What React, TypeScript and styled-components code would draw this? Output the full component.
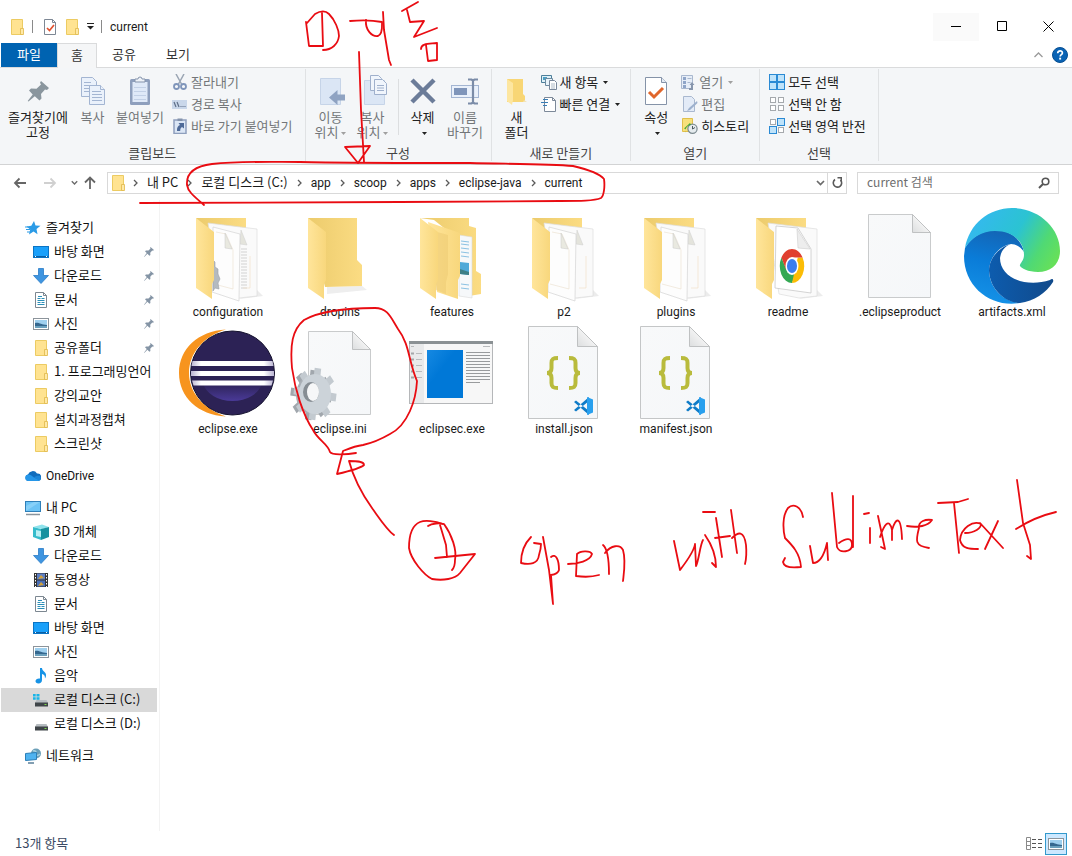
import React from 'react';
import styled, { createGlobalStyle } from 'styled-components';

const GlobalStyle = createGlobalStyle`
  *, *::before, *::after { box-sizing: border-box; }
  body {
    margin: 0;
    background: #fff;
    color: #1a1a1a;
    font-family: 'Noto Sans CJK KR', 'Noto Sans', sans-serif;
    font-size: 13px;
    line-height: 16px;
  }
  button, input { font: inherit; color: inherit; }
  button { border: 0; padding: 0; background: none; }
  a { color: inherit; text-decoration: none; }
  svg { display: block; flex: none; }
`;

/* ---------- layout ---------- */

const Window = styled.div`
  position: relative;
  display: flex;
  flex-direction: column;
  min-height: 100vh;
  overflow: hidden;
`;

const Label = styled.span<{ $latin?: boolean }>`
  padding-bottom: ${(p) => (p.$latin ? 0 : 2)}px;
  font-family: ${(p) => (p.$latin ? "Roboto, 'Noto Sans CJK KR', sans-serif" : 'inherit')};
  font-size: ${(p) => (p.$latin ? 12 : 13)}px;
`;

const TitleBar = styled.header`
  display: flex;
  align-items: center;
  height: 43px;
  padding: 12px 1px 2px 9px;
`;

const QuickTools = styled.div`
  display: flex;
  align-items: center;
  gap: 7px;
`;

const ToolButton = styled.button`
  display: flex;
  align-items: center;
  justify-content: center;
  height: 20px;
`;

const TitleDivider = styled.span`
  width: 1px;
  height: 13px;
  margin-right: 3px;
  background: #8a8a8a;
`;

const Title = styled.h1`
  flex: 1;
  margin: 0;
  padding-left: 5px;
  font-family: Roboto, 'Noto Sans CJK KR', sans-serif;
  font-size: 12px;
  font-weight: 400;
`;

const WindowButton = styled.button<{ $shaded?: boolean }>`
  display: flex;
  align-items: center;
  justify-content: center;
  width: 46px;
  height: 28px;
  background: ${(p) => (p.$shaded ? '#fafafa' : 'transparent')};
`;

const TabBar = styled.nav`
  display: flex;
  height: 24px;
  padding: 0 4px 0 1px;
`;

const Tab = styled.button<{ $kind?: 'file' | 'active' }>`
  width: ${(p) => (p.$kind === 'file' ? 56 : p.$kind === 'active' ? 40 : 54)}px;
  height: ${(p) => (p.$kind === 'active' ? 25 : 24)}px;
  padding-bottom: 2px;
  color: ${(p) => (p.$kind === 'file' ? '#fff' : '#333')};
  background: ${(p) => (p.$kind === 'file' ? '#0063b1' : p.$kind === 'active' ? '#f5f6f7' : 'transparent')};
  border: solid #dadbdc;
  border-width: ${(p) => (p.$kind === 'active' ? '1px 1px 0' : '0')};
  position: relative;
  z-index: 1;
`;

const TabTools = styled.div`
  display: flex;
  align-items: center;
  gap: 9px;
  margin-left: auto;
`;

const Ribbon = styled.section`
  display: flex;
  height: 98px;
  border-top: 1px solid #dadbdc;
  border-bottom: 1px solid #d2d3d4;
  background: #f4f6f8;
`;

const Group = styled.div`
  display: flex;
  flex-direction: column;
  margin: 1px 0 3px;
  padding: 0 5px;
  border-right: 1px solid #e0e2e4;
`;

const GroupBody = styled.div`
  display: flex;
  flex: 1;
  padding-top: 6px;
`;

const GroupName = styled.div`
  height: 16px;
  text-align: center;
  color: #444;
`;

const BigButton = styled.button<{ $width?: number; $off?: boolean }>`
  display: flex;
  flex-direction: column;
  align-items: center;
  gap: 2px;
  width: ${(p) => p.$width ?? 44}px;
  line-height: 15px;
  color: ${(p) => (p.$off ? '#737679' : '#222')};
`;

const Caption = styled.span`
  text-align: center;
  white-space: pre;
  & > svg {
    display: inline-block;
    margin-left: 3px;
    vertical-align: middle;
  }
`;

const SmallColumn = styled.div<{ $left?: number; $right?: number }>`
  display: flex;
  flex-direction: column;
  margin: -4px ${(p) => p.$right ?? 4}px 0 ${(p) => p.$left ?? 4}px;
`;

const SmallButton = styled.button<{ $off?: boolean }>`
  display: flex;
  align-items: center;
  gap: 3px;
  height: 22px;
  white-space: nowrap;
  color: ${(p) => (p.$off ? '#737679' : '#222')};
  & > svg:last-child { margin-left: 2px; }
`;

const InnerDivider = styled.span`
  width: 1px;
  height: 56px;
  margin: 4px 2px 0 3px;
  background: #dcdee0;
`;

const AddressRow = styled.div`
  display: flex;
  align-items: center;
  height: 35px;
  padding: 0 13px 0 12px;
`;

const NavButton = styled.button<{ $width: number }>`
  display: flex;
  align-items: center;
  justify-content: center;
  width: ${(p) => p.$width}px;
  height: 22px;
`;

const AddressBox = styled.div`
  display: flex;
  flex: 1;
  align-items: center;
  height: 22px;
  margin: 0 10px 0 3px;
  padding-left: 2px;
  border: 1px solid #d9d9d9;
`;

const Crumbs = styled.ol`
  display: flex;
  flex: 1;
  margin: 0;
  padding: 0;
  list-style: none;
`;

const Crumb = styled.li`
  display: flex;
  align-items: center;
  height: 20px;
  white-space: nowrap;
  & > svg { margin: 0 9px; }
  &:first-child > svg { margin-left: 7px; }
`;

const CrumbLink = styled(Label)``;

const RefreshButton = styled.button`
  display: flex;
  align-items: center;
  justify-content: center;
  width: 19px;
  height: 20px;
  margin-left: 2px;
  border-left: 1px solid #d9d9d9;
`;

const SearchBox = styled.label`
  display: flex;
  align-items: center;
  width: 202px;
  height: 22px;
  padding: 0 8px 0 9px;
  border: 1px solid #d9d9d9;
`;

const SearchInput = styled.input`
  flex: 1;
  min-width: 0;
  padding: 0 0 2px;
  border: 0;
  outline: 0;
  background: none;
  font-size: 12px;
  &::placeholder { color: #6d6d6d; opacity: 1; }
`;

const Main = styled.div`
  display: flex;
  flex: 1;
`;

const Sidebar = styled.nav`
  display: flex;
  flex-direction: column;
  gap: 8px;
  width: 160px;
  padding: 16px 2px 0 1px;
  border-right: 1px solid #f3f3f3;
`;

const PlaceList = styled.ul`
  margin: 0;
  padding: 0;
  list-style: none;
`;

const Place = styled.a<{ $level: number; $selected?: boolean }>`
  display: flex;
  align-items: center;
  gap: 5px;
  height: 24px;
  padding-left: ${(p) => 24 + p.$level * 8}px;
  padding-right: 3px;
  white-space: nowrap;
  color: #111;
  background: ${(p) => (p.$selected ? '#d9d9d9' : 'transparent')};
  & > svg:last-child:not(:first-child) { margin-left: auto; }
`;

const Files = styled.main`
  flex: 1;
  display: grid;
  grid-template-columns: repeat(auto-fill, 112px);
  align-content: start;
  row-gap: 5px;
  padding: 8px 0 0 12px;
`;

const FileItem = styled.button`
  display: flex;
  flex-direction: column;
  align-items: center;
  & > svg { overflow: visible; }
`;

const StatusBar = styled.footer`
  display: flex;
  align-items: center;
  height: 25px;
  padding: 0 5px 0 15px;
  color: #3b4a63;
`;

const ViewButtons = styled.div`
  display: flex;
  align-items: center;
  margin-left: auto;
`;

const ViewButton = styled.button<{ $on?: boolean }>`
  display: flex;
  align-items: center;
  justify-content: center;
  width: 22px;
  height: 22px;
  border: 1px solid ${(p) => (p.$on ? '#3399cc' : 'transparent')};
  background: ${(p) => (p.$on ? '#cce8ff' : 'transparent')};
`;

const Ink = styled.svg`
  position: absolute;
  top: 0;
  left: 0;
  z-index: 2;
  pointer-events: none;
`;

/* ---------- small icons ---------- */

const FolderSmall = ({ size = 16 }: { size?: number }) => (
  <svg width={size} height={size} viewBox="0 0 16 16">
    <path d="M2.500.5h11v15h-11z" fill="#ffe391" stroke="#eccb62" />
    <path d="M11.500 9.500h3v6h-3z" fill="#ffe9a6" stroke="#e0b84a" strokeWidth=".8" />
  </svg>
);

const DocCheck = () => (
  <svg width="14" height="16" viewBox="0 0 14 16">
    <path d="M1.500.5h8l3 3v12h-11z" fill="#fff" stroke="#7d8794" />
    <path d="M9.500.5v3h3" fill="none" stroke="#7d8794" />
    <path d="M4 9l2.500 2.500L11 6" fill="none" stroke="#e0512f" strokeWidth="1.700" />
  </svg>
);

const Caret = ({ color = '#222' }: { color?: string }) => (
  <svg width="5" height="3" viewBox="0 0 5 3">
    <path d="M0 0h5L2.500 3z" fill={color} />
  </svg>
);

const Chevron = () => (
  <svg width="5" height="8" viewBox="0 0 5 8">
    <path d="M1 1l3 3-3 3" fill="none" stroke="#5a5a5a" strokeWidth="1.300" />
  </svg>
);

const ChevronDown = ({ size = 9 }: { size?: number }) => (
  <svg width={size} height={size} viewBox="0 0 9 9">
    <path d="M1 3l3.500 3.500L8 3" fill="none" stroke="#6a6a6a" strokeWidth="1.700" />
  </svg>
);

const PinShape = ({ size, color = '#8494a5' }: { size: number; color?: string }) => (
  <svg width={size} height={size} viewBox="0 0 20 20">
    <path d="M13 0l7 6-2 1.500-1.500-.3-4 4.300.3 4.500-2 1.500-4-4L1 19.500 0 20l.4-1.200L5.500 12 2 8.500l2-1.700 5 .2L13 3l-.7-1.700z" fill={color} />
  </svg>
);

const CopyBig = () => (
  <svg width="26" height="32" viewBox="0 0 26 32">
    <g fill="#eaf1fb" stroke="#a3b5d2">
      <path d="M1.500 2.500h11l4 4v15h-15z" />
      <path d="M4 7.500h7M4 10.500h9M4 13.500h9M4 16.500h9" />
      <path d="M9.500 10.500h11l4 4v15h-15z" />
      <path d="M20.500 10.500v4h4M12 16.500h9M12 19.500h10M12 22.500h10M12 25.500h10" />
    </g>
  </svg>
);

const PasteBig = () => (
  <svg width="26" height="32" viewBox="0 0 26 32">
    <rect x="3" y="4" width="20" height="26" rx="1.500" fill="#8e9fbd" />
    <rect x="5.500" y="7" width="15" height="20" fill="#dfe9f8" />
    <path d="M7 12.500h12M7 16.500h12M7 20.500h12M7 24.500h12" stroke="#c2d0e6" />
    <path d="M8 7V4h3a2 2 0 0 1 4 0h3v3z" fill="#eef2f8" stroke="#8493ab" />
  </svg>
);

const PinBig = () => (
  <svg width="26" height="32" viewBox="0 0 26 32">
    <path d="M16 6l8 7-2 2-2-.5-4 4.500.5 4.500-2 2-4.700-4.300L3.500 26.500 2.700 26l5-6.500L4 15.500l2-2 5.500.2L16 9.500l-1-1.800z" fill="#8a969e" />
  </svg>
);

const MoveBig = () => (
  <svg width="28" height="32" viewBox="0 0 28 32">
    <path d="M3.500 3.500h20v26h-20z" fill="#dbe6f5" stroke="#c6d4e8" />
    <path d="M28 19.500v6h-7.500V30L12 22.500l8.500-7.500v4.500z" fill="#8fa3c2" />
  </svg>
);

const CopyToBig = () => (
  <svg width="28" height="32" viewBox="0 0 28 32">
    <path d="M5.500 5.500h20v24h-20z" fill="#dbe6f5" stroke="#c6d4e8" />
    <g fill="#f0f5fc" stroke="#9fb0cc">
      <path d="M11.500.5h8l3 3v12h-11z" />
      <path d="M15.500 4.500h8l4 4v11h-12z" />
      <path d="M18 10.500h7M18 13h7M18 15.500h7" />
    </g>
  </svg>
);

const DeleteBig = () => (
  <svg width="28" height="32" viewBox="0 0 28 32">
    <path d="M3 5l22 22M25 5L3 27" stroke="#6b7c99" strokeWidth="4.500" />
  </svg>
);

const RenameBig = () => (
  <svg width="30" height="32" viewBox="0 0 30 32">
    <rect x="1.500" y="10.500" width="27" height="12" fill="#eaf1fb" stroke="#a3b5d2" />
    <rect x="4" y="13" width="13" height="7" fill="#7f95ba" />
    <path d="M18 4.500h3.500l1.500 1 1.500-1H28M23 5v23M18 28.500h3.500l1.500-1 1.500 1H28" fill="none" stroke="#7b8ca8" strokeWidth="2.200" />
  </svg>
);

const NewFolderBig = () => (
  <svg width="26" height="32" viewBox="0 0 26 32">
    <path d="M3 4h16v15l2 2v6H3z" fill="#f8d675" />
    <path d="M3 4l6 4v17l-1 5-5-4z" fill="#fde6a0" />
    <path d="M20 25l3 2h-4z" fill="#f3e3b4" />
  </svg>
);

const PropertiesBig = () => (
  <svg width="26" height="32" viewBox="0 0 26 32">
    <path d="M2.500 2.500h16l5 5v22h-21z" fill="#fff" stroke="#8593a8" />
    <path d="M18.500 2.500v5h5" fill="#e4ebf5" stroke="#8593a8" />
    <path d="M6 17l5 5 9-9" fill="none" stroke="#e0662b" strokeWidth="3" />
  </svg>
);

const Scissors = () => (
  <svg width="16" height="16" viewBox="0 0 16 16" fill="none">
    <path d="M4 0l5.500 10M12 0L6.500 10" stroke="#9aa5b3" strokeWidth="1.500" />
    <circle cx="4.500" cy="12.500" r="2.500" stroke="#7f95ba" strokeWidth="1.800" />
    <circle cx="11.500" cy="12.500" r="2.500" stroke="#7f95ba" strokeWidth="1.800" />
  </svg>
);

const PathCopy = () => (
  <svg width="16" height="16" viewBox="0 0 16 16">
    <rect x="0" y="4" width="15" height="9" fill="#c9d7ea" />
    <path d="M2 6l2 5M5 6l2 5M8.500 10.500h1M10.500 10.500h1M12.500 10.500h1" stroke="#5f6f88" strokeWidth="1.200" />
  </svg>
);

const PasteShortcut = () => (
  <svg width="16" height="16" viewBox="0 0 16 16">
    <rect x="2" y="2" width="12" height="13.500" fill="#dbe6f5" stroke="#8e9fbd" strokeWidth="1.500" />
    <rect x="5.500" y=".5" width="5" height="2.500" fill="#8493ab" />
    <path d="M5 13c-.3-3.500 1-5 3-6L6.500 5H12v5.500L10 9c-1.300.7-1.800 2-1.800 4z" fill="#4e6a98" />
  </svg>
);

const NewItem = () => (
  <svg width="16" height="16" viewBox="0 0 16 16">
    <path d="M.5 1.500h10v7H.5z" fill="#dff0f8" stroke="#4c7f9a" />
    <path d="M2 3h4v3H2z" fill="#4b9fc4" />
    <path d="M4.500 4.500h7v7h-7z" fill="#e9f4fb" stroke="#6c8aa0" />
    <path d="M8.500 6.500h5l2 2v7h-7z" fill="#fff" stroke="#78879b" />
    <path d="M10 10h4M10 12h4M10 14h4" stroke="#9aa8b8" strokeWidth=".8" />
  </svg>
);

const EasyAccess = () => (
  <svg width="16" height="16" viewBox="0 0 16 16">
    <path d="M3.500 1.500h8l3 3v11h-11z" fill="#fff" stroke="#7c8999" />
    <path d="M11.500 1.500v3h3" fill="none" stroke="#7c8999" />
    <path d="M2 3.500h5M0 6.500h7M2 9.500h4" stroke="#3a7eb5" strokeWidth="1.200" />
  </svg>
);

const OpenIcon = () => (
  <svg width="16" height="16" viewBox="0 0 16 16">
    <path d="M1.500 1.500h11v13h-11z" fill="#e6edf7" stroke="#a9b8cf" />
    <path d="M3 3h3v3H3zM3 7h3v3H3zM3 11h3v3H3z" fill="#8fa5c8" />
    <path d="M7.500 4.500h4M7.500 8.500h3" stroke="#a9b8cf" />
    <path d="M9 16v-2h2v-3H9.500L12 8l2.500 3H13v5z" fill="#8796ad" />
  </svg>
);

const EditIcon = () => (
  <svg width="16" height="16" viewBox="0 0 16 16">
    <path d="M1.500.5h8l3 3v12h-11z" fill="#e3ebf7" stroke="#a9b8cf" />
    <path d="M15 5l-8 7-2 3 3-1 7.500-7z" fill="#9cb0cd" />
  </svg>
);

const HistoryIcon = () => (
  <svg width="16" height="16" viewBox="0 0 16 16">
    <path d="M.5.500h10v13H.5z" fill="#f7e07a" stroke="#e0bf4b" />
    <circle cx="10.500" cy="10.700" r="4.600" fill="#e5ebee" stroke="#7b8a8f" strokeWidth="1.200" />
    <path d="M10.500 8v3l2.500-1.500" stroke="#4c5a60" fill="none" />
    <path d="M3 15.500c0-5 2-8 6-8.500L8 5l-6 5.500 1.500.5z" fill="#3fa535" />
  </svg>
);

const SelectGrid = ({ mode }: { mode: 'all' | 'none' | 'invert' }) => {
  const cells = [[1.500, 1.500], [9.500, 1.500], [1.500, 9.500], [9.500, 9.500]];
  return (
    <svg width="16" height="16" viewBox="0 0 16 16">
      {cells.map(([x, y], i) => {
        const on = mode === 'all' || (mode === 'invert' && (i === 1 || i === 2));
        const grow = on ? 1 : 0;
        return (
          <rect
            key={i}
            x={x - grow}
            y={y - grow}
            width={5 + grow * 2}
            height={5 + grow * 2}
            fill={on ? '#bfe3fa' : '#fff'}
            stroke={on ? '#2a8ad4' : '#a5a9ad'}
          />
        );
      })}
    </svg>
  );
};

const HelpIcon = () => (
  <svg width="16" height="16" viewBox="0 0 16 16">
    <circle cx="8" cy="8" r="7.500" fill="#0a63b4" stroke="#084f92" />
    <path d="M5.700 6.200c0-3.200 4.800-3 4.700-.2 0 1.700-2.200 1.700-2.200 3.500" fill="none" stroke="#fff" strokeWidth="1.700" />
    <rect x="7.200" y="10.700" width="1.900" height="1.900" fill="#fff" />
  </svg>
);

const StarIcon = () => (
  <svg width="16" height="16" viewBox="0 0 16 16">
    <path d="M9 1l1.500 4.500 5 .3-4 3.200 1 5.200L8.500 11.500 4 14.500l1.200-5L1.500 6.500l4.800-.7z" fill="#2b9be6" />
    <path d="M1 9.500h4M2 12h3M0 7h3" stroke="#2b9be6" />
  </svg>
);

const DesktopIcon = () => (
  <svg width="16" height="16" viewBox="0 0 16 16">
    <rect x=".5" y="2.500" width="15" height="11" fill="#1aa0fa" stroke="#0b74c4" />
    <path d="M1 12.500h14" stroke="#0a5fa4" />
    <path d="M2 12.500h1M13 12.500h1" stroke="#fff" />
  </svg>
);

const DownloadIcon = () => (
  <svg width="16" height="16" viewBox="0 0 16 16">
    <path d="M5.500.5h5v7h5L8 15.500.5 7.500h5z" fill="#3f95e0" stroke="#2a7cc8" strokeWidth=".8" />
  </svg>
);

const DocumentIcon = () => (
  <svg width="16" height="16" viewBox="0 0 16 16">
    <path d="M2.500.5h8l3 3v12h-11z" fill="#fff" stroke="#7c8791" />
    <path d="M10.500.5v3h3" fill="none" stroke="#7c8791" />
    <path d="M5 4.500h4M4.500 6.500h3M8.500 6.500h3M4.500 8.500h7M4.500 10.500h3M8.500 10.500h3M4.500 12.500h7" stroke="#2b8fb8" />
  </svg>
);

const PictureIcon = () => (
  <svg width="16" height="16" viewBox="0 0 16 16">
    <rect x=".5" y="2.500" width="15" height="11" fill="#fff" stroke="#8c949b" />
    <rect x="2" y="4" width="12" height="8" fill="#9fd0ef" />
    <path d="M2 7c4-1 6 2 12 2v3H2z" fill="#35688f" />
    <path d="M2 10h12v2H2z" fill="#6aa0bd" />
  </svg>
);

const CloudIcon = () => (
  <svg width="16" height="16" viewBox="0 0 16 16">
    <path d="M3.500 13a3.300 3.300 0 0 1-.5-6.500 5 5 0 0 1 9-1 3.500 3.500 0 0 1 1 7.500z" fill="#0f6cbd" />
    <path d="M3 13a3.300 3.300 0 0 1 0-6.500c3 0 4 1.500 6 3L14.500 12q-.7 1-1.500 1z" fill="#2596e8" />
    <path d="M9 9.500c1.500-1.500 4-2 6-1.500a3 3 0 0 1-.8 4.500z" fill="#1b85d8" />
  </svg>
);

const ComputerIcon = () => (
  <svg width="16" height="16" viewBox="0 0 16 16">
    <rect x=".5" y="1.500" width="15" height="10" fill="#6cc3f5" stroke="#2f7fb8" />
    <path d="M1 11V6l8-4h6z" fill="#9ad8fa" opacity=".6" />
    <path d="M1 14.500h14" stroke="#8a949d" strokeWidth="1.500" />
  </svg>
);

const CubeIcon = () => (
  <svg width="16" height="16" viewBox="0 0 16 16">
    <path d="M0 3l9-2.500L16 3l-7 2z" fill="#8fe3ec" />
    <path d="M0 3l8 2v11l-8-3z" fill="#35bccb" />
    <path d="M8 5l8-2v10l-8 3z" fill="#17919f" />
    <path d="M3 6l5 1v6l-5-1z" fill="#b9f0f4" />
  </svg>
);

const VideoIcon = () => (
  <svg width="16" height="16" viewBox="0 0 16 16">
    <rect x="1" y="1" width="14" height="14" fill="#333" />
    <rect x="4" y="1.500" width="8" height="6" fill="#5d7fc4" />
    <rect x="4" y="8.500" width="8" height="6" fill="#4a6fb8" />
    <path d="M5 7l3-4 3 3zM5 14l3-4 3 3z" fill="#d2a13a" />
    <path d="M2.500 2v13M13.500 2v13" stroke="#fff" strokeDasharray="1.500 1.500" />
  </svg>
);

const MusicIcon = () => (
  <svg width="16" height="16" viewBox="0 0 16 16">
    <path d="M7 0h2c0 3 4 4 4 7 0 2-.5 2.500-1 3.500 0-3-1-4-3-4.500V12c0 2-1.500 3.500-3.500 3.500S2.500 14.500 2.500 13s2-3 4.500-2.500z" fill="#1793e6" />
  </svg>
);

const DriveIcon = ({ windows }: { windows?: boolean }) => (
  <svg width="16" height="16" viewBox="0 0 16 16">
    {windows && (
      <path d="M0 2h2.700v2.500H0zM3.500 2h3v2.500h-3zM0 5.300h2.700v2.500H0zM3.500 5.300h3v2.500h-3z" fill="#19b5e8" />
    )}
    <path d="M3.500 8h10L15 11H2z" fill="#b6bcc0" />
    <rect x="2" y="10.500" width="13" height="4" fill="#3f4549" />
    <path d="M11.500 12.500h2" stroke="#7dd84b" />
  </svg>
);

const NetworkIcon = () => (
  <svg width="16" height="16" viewBox="0 0 16 16">
    <circle cx="11" cy="5.500" r="5" fill="#6b9fb8" />
    <path d="M8 3c2-1 4 1 3 3s2 2 4 0" fill="none" stroke="#a9d3e2" strokeWidth="1.500" />
    <path d="M.5 5.500l11-1v7l-11 1z" fill="#4fb3f0" stroke="#2b7fb8" />
    <path d="M3 15h6" stroke="#5a7f98" strokeWidth="1.500" />
  </svg>
);

/* ---------- large file icons ---------- */

const FileDefs = () => (
  <svg width="0" height="0" aria-hidden="true">
    <defs>
      <linearGradient id="back" x1="0" x2="1"><stop offset="0" stopColor="#eccb6c" /><stop offset="1" stopColor="#fbdc83" /></linearGradient>
      <linearGradient id="cover" x1="0" x2="1"><stop offset="0" stopColor="#ffe59b" /><stop offset="1" stopColor="#f8d77c" /></linearGradient>
      <linearGradient id="paper" x1="0" y1="0" x2="1" y2="1"><stop offset="0" stopColor="#f8f9fa" /><stop offset="1" stopColor="#f5f7f9" /></linearGradient>
      <linearGradient id="fold" x1="0" y1="1" x2="1" y2="0"><stop offset="0" stopColor="#dcdedf" /><stop offset=".6" stopColor="#f6f6f6" /></linearGradient>
      <linearGradient id="edgeTop" x1="0" y1=".3" x2="1" y2=".7"><stop offset="0" stopColor="#35b8f1" /><stop offset=".5" stopColor="#2bc3d2" /><stop offset=".8" stopColor="#50d974" /><stop offset="1" stopColor="#66e05a" /></linearGradient>
      <linearGradient id="edgeMid" x1=".6" y1="0" x2=".4" y2="1"><stop offset="0" stopColor="#1464b4" /><stop offset=".45" stopColor="#0a7cd8" /><stop offset="1" stopColor="#1593e8" /></linearGradient>
      <linearGradient id="edgeDark" x1="0" x2="1"><stop offset="0" stopColor="#0d5cae" /><stop offset="1" stopColor="#114a8b" /></linearGradient>
      <linearGradient id="stripe" x1="0" x2="1"><stop offset="0" stopColor="#b9b3d2" /><stop offset=".12" stopColor="#fff" /><stop offset=".88" stopColor="#fff" /><stop offset="1" stopColor="#b9b3d2" /></linearGradient>
      <linearGradient id="glow" x1="0" y1="0" x2="0" y2="1"><stop offset="0" stopColor="#2c2255" /><stop offset="1" stopColor="#4a3a98" /></linearGradient>
      <linearGradient id="pane" x1="0" y1="0" x2="1" y2="1"><stop offset="0" stopColor="#1689e2" /><stop offset=".4" stopColor="#0078d7" /></linearGradient>
    </defs>
  </svg>
);

type FolderKind = 'config' | 'empty' | 'features' | 'papers' | 'chrome';

const teeth = [0, 45, 90, 135, 180, 225, 270, 315];

const Gear = () => (
  <g>
    {teeth.map((a) => (
      <rect key={a} x="-4" y="-25" width="8" height="10" fill="#a1a7ad" transform={`translate(19 70) scale(.82 1) rotate(${a + 8})`} />
    ))}
    <ellipse cx="19" cy="70" rx="15" ry="19" fill="#a9afb5" />
    {teeth.map((a) => (
      <rect key={a} x="-4" y="-26" width="8" height="10" fill="#c3cad0" transform={`translate(23 69) scale(.82 1) rotate(${a + 8})`} />
    ))}
    <ellipse cx="23" cy="69" rx="16" ry="20" fill="#ccd3d9" />
    <ellipse cx="19" cy="67" rx="8" ry="10" fill="#868d93" />
    <ellipse cx="21" cy="67" rx="6" ry="9" fill="#f6f7f8" />
  </g>
);

const FolderLarge = ({ kind }: { kind: FolderKind }) => (
  <svg width="96" height="96" viewBox="0 0 96 96">
    {kind === 'empty' && (
      <>
        <path d="M70 78l5 4-40 4 0-7z" fill="#eee" />
        <path d="M16 10h49v42l5 5v21l-37 1z" fill="url(#back)" />
      </>
    )}
    {kind === 'features' && (
      <>
        <path d="M16 10h49v8l7 2v43l5 3v20l-12 2V40L30 12z" fill="url(#back)" />
        <path d="M55 27l13 2v61l-13-2z" fill="#f6f8fa" stroke="#dadada" strokeWidth=".6" />
        <path d="M57 33l8 1M57 36l8 1M57 40l8 1M57 44l8 1M57 48l8 1M57 76l8 1M57 80l8 1" stroke="#6fb3dc" strokeWidth=".8" />
        <path d="M56 54l9 1v12l-9-1z" fill="#4fa9d8" />
        <path d="M56 61l9 3v3l-9-1z" fill="#3d7f86" />
        <path d="M24 14l32 11v43l-2 4v19l-21-7z" fill="url(#cover)" />
        <path d="M26 22l18 5v39l-2 8v12l-10-4z" fill="#edcb73" opacity=".55" />
      </>
    )}
    {(kind === 'config' || kind === 'papers' || kind === 'chrome') && (
      <>
        <path d="M77 82l6 6-24 3z" fill="#ececec" />
        <path d="M16 10h50v12L30 40z" fill="url(#back)" />
        <path d="M28 15l49 6v67l-18 2-20-4z" fill="#fafafa" stroke="#dcdcdc" strokeWidth=".7" />
      </>
    )}
    {(kind === 'config' || kind === 'papers') && (
      <>
        <path d="M61 22l6 15-7-1z" fill="#e4e4dc" stroke="#cfcfcf" strokeWidth=".5" />
        {kind === 'config' && Array.from({ length: 14 }, (_, i) => (
          <path key={i} d={`M61 ${41 + i * 3}h6`} stroke="#c8c8c8" strokeWidth=".8" />
        ))}
        <path d="M70 48v32h-7" fill="none" stroke="#f0dfc8" strokeWidth=".7" />
        <path d="M33 19l27 7-1 67-27-9z" fill="#fdfdfd" stroke="#d4d4d4" strokeWidth=".7" />
        <path d="M36 24l10 2 7 16v39l-19-5" fill="none" stroke="#ece2d2" strokeWidth=".7" />
        <path d="M45 25l7 16-7-1z" fill="#e9e9e0" stroke="#c9c9c9" strokeWidth=".5" />
      </>
    )}
    {kind === 'config' && (
      <path d="M33 52l2 2v5l3 2v5l2 5-2 4 1 6-4-1-2 3z" fill="#b4babf" stroke="#9aa0a5" strokeWidth=".6" />
    )}
    {kind === 'chrome' && (
      <>
        <path d="M36 18l22 2 13 21v44l-36-5z" fill="#fff" stroke="#c9c9c9" strokeWidth=".8" />
        <path d="M57 21l1 19 12 1z" fill="#ededed" stroke="#ccc" strokeWidth=".6" />
        <g transform="translate(52 58) scale(.72 1)">
          <path d="M-14.700-8.500A17 17 0 0 0 0 17L7.400 4.200-7.400 4.200z" fill="#34a853" />
          <path d="M14.700-8.500A17 17 0 0 1 0 17L8-8.500z" fill="#fbbc05" />
          <path d="M-14.700-8.500A17 17 0 0 1 14.700-8.500H0L-8 4z" fill="#e04030" />
          <circle r="9" fill="#fff" />
          <circle r="7" fill="#3b7ded" />
        </g>
      </>
    )}
    <path d="M16 10l18 14v48l-2 4v15l-16-11z" fill="url(#cover)" />
  </svg>
);

const BlankFile = ({ gear }: { gear?: boolean }) => (
  <svg width="96" height="96" viewBox="0 0 96 96">
    <path d="M16.500 6.500h44l18 18v65h-62z" fill="url(#paper)" stroke="#c9cbcc" />
    <path d="M60.500 6.500v18h18z" fill="url(#fold)" stroke="#bfc1c2" />
    {gear && <Gear />}
  </svg>
);

const JsonFile = () => (
  <svg width="96" height="96" viewBox="0 0 96 96">
    <path d="M12.500 1.500h49l20 20v72h-69z" fill="url(#paper)" stroke="#c4c6c7" />
    <path d="M61.500 1.500v20h20z" fill="url(#fold)" stroke="#bfc1c2" />
    <g fill="none" stroke="#b9bb3c" strokeWidth="4">
      <path d="M42 33c-5 0-6.500 1-6.500 5v5c0 3-1 5-4.500 5 3.500 0 4.500 2 4.500 5v5c0 4 1.500 5 6.500 5" />
      <path d="M53 33c5 0 6.500 1 6.500 5v5c0 3 1 5 4.500 5-3.500 0-4.500 2-4.500 5v5c0 4-1.500 5-6.500 5" />
    </g>
    <path d="M58 77l2-1.500L73 86v4zM58 85l2 1.500L73 76v-4z" fill="#0f7cc8" />
    <path d="M71 72l6 2.500v13L71 90z" fill="#29a0ee" />
  </svg>
);

const EdgeLogo = () => (
  <svg width="96" height="96" viewBox="0 0 96 96">
    <path d="M1 40C8 28 20 22 31 22C48 22 58 33 60 44C57 39 52 36 47 36C35 38 25 50 25 63C26 80 38 93 56 95C28 100 0 80 0 48Z" fill="url(#edgeMid)" />
    <path d="M47 36C38 38 25 48 25 63C26 82 42 95 56 95C70 93 82 85 89 74C90 71 88 70 86 72C62 80 36 70 36 50C37 43 41 38 47 36Z" fill="url(#edgeDark)" />
    <path d="M1 40C5 16 25 0 48 0C75 0 96 20 96 43C96 56 87 64 74 64C64 64 57 60 56 58C55 56 60 53 60 47C60 33 48 23 31 23C18 23 7 30 1 40Z" fill="url(#edgeTop)" />
  </svg>
);

const EclipseLogo = () => (
  <svg width="96" height="96" viewBox="0 0 96 96">
    <path d="M46 4.500C18 6 -1 24 -1 48C-1 72 18 90 46 91.500C24 84 9 68 9 48C9 28 24 11 46 4.500Z" fill="#f7941e" />
    <circle cx="52.500" cy="48" r="42" fill="#2c2255" stroke="#15122e" />
    <path d="M23 58a30 22 0 0 0 59 0z" fill="url(#glow)" />
    <path d="M12.500 36h80l1 5h-82zM11 46h83v5H11zM12 55.500h81l-1.500 5h-78z" fill="url(#stripe)" />
  </svg>
);

const ConsoleApp = () => (
  <svg width="96" height="96" viewBox="0 0 96 96">
    <rect x="5.500" y="16.500" width="83" height="62" fill="#f7f7f7" stroke="#b5b7b9" />
    <rect x="5" y="16" width="84" height="3" fill="#8b9194" />
    <rect x="6" y="19" width="14" height="59" fill="#e9eaeb" />
    <path d="M79 21.500h7M7 21.500h3M12 28.500h6M12 34.500h6M12 40.500h6M12 46.500h6M12 52.500h6" stroke="#b9bbbd" />
    <path d="M7 28.500h3M7 34.500h3M7 40.500h3M7 46.500h3M7 52.500h3" stroke="#a5a7a9" strokeWidth="2" />
    <rect x="23" y="25" width="36" height="48" fill="url(#pane)" />
    <path d="M62 27.500h24M62 30.500h24M62 33.500h24M62 36.500h24M62 39.500h24M62 42.500h24M62 45.500h24M62 48.500h24M62 51.500h24M62 54.500h24M62 57.500h14" stroke="#999b9d" />
  </svg>
);

/* ---------- data ---------- */

type PlaceEntry = { name: string; icon: React.ReactNode; level: number; pinned?: boolean; selected?: boolean };

const places: PlaceEntry[][] = [
  [
    { name: '즐겨찾기', icon: <StarIcon />, level: 0 },
    { name: '바탕 화면', icon: <DesktopIcon />, level: 1, pinned: true },
    { name: '다운로드', icon: <DownloadIcon />, level: 1, pinned: true },
    { name: '문서', icon: <DocumentIcon />, level: 1, pinned: true },
    { name: '사진', icon: <PictureIcon />, level: 1, pinned: true },
    { name: '공유폴더', icon: <FolderSmall />, level: 1, pinned: true },
    { name: '1. 프로그래밍언어', icon: <FolderSmall />, level: 1 },
    { name: '강의교안', icon: <FolderSmall />, level: 1 },
    { name: '설치과정캡쳐', icon: <FolderSmall />, level: 1 },
    { name: '스크린샷', icon: <FolderSmall />, level: 1 },
  ],
  [{ name: 'OneDrive', icon: <CloudIcon />, level: 0 }],
  [
    { name: '내 PC', icon: <ComputerIcon />, level: 0 },
    { name: '3D 개체', icon: <CubeIcon />, level: 1 },
    { name: '다운로드', icon: <DownloadIcon />, level: 1 },
    { name: '동영상', icon: <VideoIcon />, level: 1 },
    { name: '문서', icon: <DocumentIcon />, level: 1 },
    { name: '바탕 화면', icon: <DesktopIcon />, level: 1 },
    { name: '사진', icon: <PictureIcon />, level: 1 },
    { name: '음악', icon: <MusicIcon />, level: 1 },
    { name: '로컬 디스크 (C:)', icon: <DriveIcon windows />, level: 1, selected: true },
    { name: '로컬 디스크 (D:)', icon: <DriveIcon />, level: 1 },
  ],
  [{ name: '네트워크', icon: <NetworkIcon />, level: 0 }],
];

const files: { name: string; icon: React.ReactNode }[] = [
  { name: 'configuration', icon: <FolderLarge kind="config" /> },
  { name: 'dropins', icon: <FolderLarge kind="empty" /> },
  { name: 'features', icon: <FolderLarge kind="features" /> },
  { name: 'p2', icon: <FolderLarge kind="papers" /> },
  { name: 'plugins', icon: <FolderLarge kind="papers" /> },
  { name: 'readme', icon: <FolderLarge kind="chrome" /> },
  { name: '.eclipseproduct', icon: <BlankFile /> },
  { name: 'artifacts.xml', icon: <EdgeLogo /> },
  { name: 'eclipse.exe', icon: <EclipseLogo /> },
  { name: 'eclipse.ini', icon: <BlankFile gear /> },
  { name: 'eclipsec.exe', icon: <ConsoleApp /> },
  { name: 'install.json', icon: <JsonFile /> },
  { name: 'manifest.json', icon: <JsonFile /> },
];

const crumbs = ['내 PC', '로컬 디스크 (C:)', 'app', 'scoop', 'apps', 'eclipse-java', 'current'];

const isLatin = (text: string) => /^[\x20-\x7e]+$/.test(text);

/* pen strokes laid over the window */
const strokes = [
  'M307 23L315 14C320 11 325 10 329 14C335 20 339 30 339 36C338 44 332 50 323 50',
  'M306 22L309 46L322 46M322 13L323 46',
  'M350 21C360 20 372 20 382 22M366 20C365 30 372 37 378 36C383 34 382 26 382 22',
  'M383 12L384 30L389 60L391 65',
  'M402 11L418 2M407 10L410 22L424 21L414 37L437 28',
  'M421 49C421 43 430 44 437 43L437 60L428 61L426 45',
  'M359 52L361 110L364 162M345 147L370 146L358 163Z',
  'M204 205C195 197 188 192 187 185C186 172 196 166 212 164C240 161 270 162 300 162C340 163 440 163 470 163C510 164 550 164 573 166C586 169 600 174 604 179C605 186 604 196 601 198C594 201 580 201 560 201L400 202L140 203',
  'M356 453C345 455 332 455 330 452C328 444 318 440 313 430C303 415 295 390 292 368C290 345 292 330 304 320C320 311 350 308 375 308C388 308 391 318 398 329C410 345 408 360 417 381C416 400 408 425 390 434C378 441 372 443 363 445C355 446 348 449 343 451L337 474C350 471 362 467 364 465C364 461 355 461 349 461C353 476 362 494 372 508C382 522 387 530 394 535',
  'M428 526C432 523 440 523 444 524C452 535 457 550 455 560Q455 567 452 570',
  'M443 524C435 521 425 520 420 522C410 526 409 540 409 548C411 560 424 575 432 579C443 581 455 579 460 573L475 554L435 558M440 525L446 545L447 557',
  'M531 537C523 545 521 555 521 563C530 565 538 564 539 555Q541 549 541 544L534 543',
  'M543 537L549 570L553 604L551 575M551 557C556 553 559 560 559 570Q558 574 551 575',
  'M568 564C578 564 590 561 592 554C590 550 580 551 577 554L576 576C583 577 592 577 599 575',
  'M603 545Q609 550 609 574M605 553C611 545 620 544 623 550C626 560 624 572 623 581',
  'M674 541L680 570C686 562 694 552 695 544L696 566C699 560 700 545 703 540',
  'M705 535C712 545 716 556 716 567L712 563M703 512L715 512M716 518L722 557M715 538L730 536',
  'M731 510L737 553M732 538C738 532 744 530 746 545Q747 556 745 564',
  'M803 517C801 506 793 503 788 508C782 516 783 530 785 538C792 545 800 553 801 567C793 568 784 568 783 562L785 558',
  'M810 546L813 563C820 563 824 556 827 543L828 560',
  'M832 493L837 547C840 554 852 552 852 545C852 537 846 538 839 543M853 496L853 547',
  'M870 528L870 543M864 514L869 513',
  'M878 516L885 549L881 547M880 537C884 525 889 517 892 530L892 540M892 530C896 517 901 515 902 539',
  'M907 526C918 528 928 526 932 520C926 519 918 521 919 528C916 540 914 546 929 548',
  'M938 503L958 502L968 499M954 503L959 553',
  'M965 533C975 533 981 528 981 524C973 520 961 528 960 540C962 549 970 549 978 549M980 523L1003 548M998 521L985 549',
  'M1017 480L1023 523L1030 545L1031 559L1027 556M1016 529C1030 520 1043 515 1056 512',
];

/* ---------- sections ---------- */

const RibbonSection = () => (
  <Ribbon>
    <Group>
      <GroupBody>
        <BigButton $width={66}><PinBig /><Caption>{'즐겨찾기에\n고정'}</Caption></BigButton>
        <BigButton $off $width={43}><CopyBig /><Caption>복사</Caption></BigButton>
        <BigButton $off $width={52}><PasteBig /><Caption>붙여넣기</Caption></BigButton>
        <SmallColumn $right={7}>
          <SmallButton $off><Scissors />잘라내기</SmallButton>
          <SmallButton $off><PathCopy />경로 복사</SmallButton>
          <SmallButton $off><PasteShortcut />바로 가기 붙여넣기</SmallButton>
        </SmallColumn>
      </GroupBody>
      <GroupName>클립보드</GroupName>
    </Group>
    <Group>
      <GroupBody>
        <BigButton $off $width={40}><MoveBig /><Caption>{'이동\n위치'}<Caret color="#a0a0a0" /></Caption></BigButton>
        <BigButton $off><CopyToBig /><Caption>{'복사\n위치'}<Caret color="#a0a0a0" /></Caption></BigButton>
        <InnerDivider />
        <BigButton><DeleteBig /><Caption>{'삭제\n'}<Caret /></Caption></BigButton>
        <BigButton $off $width={41}><RenameBig /><Caption>{'이름\n바꾸기'}</Caption></BigButton>
      </GroupBody>
      <GroupName>구성</GroupName>
    </Group>
    <Group>
      <GroupBody>
        <BigButton $width={40}><NewFolderBig /><Caption>{'새\n폴더'}</Caption></BigButton>
        <SmallColumn $right={5}>
          <SmallButton><NewItem />새 항목 <Caret /></SmallButton>
          <SmallButton><EasyAccess />빠른 연결 <Caret /></SmallButton>
        </SmallColumn>
      </GroupBody>
      <GroupName>새로 만들기</GroupName>
    </Group>
    <Group>
      <GroupBody>
        <BigButton $width={40}><PropertiesBig /><Caption>{'속성\n'}<Caret /></Caption></BigButton>
        <SmallColumn $right={5}>
          <SmallButton $off><OpenIcon />열기 <Caret color="#a0a0a0" /></SmallButton>
          <SmallButton $off><EditIcon />편집</SmallButton>
          <SmallButton><HistoryIcon />히스토리</SmallButton>
        </SmallColumn>
      </GroupBody>
      <GroupName>열기</GroupName>
    </Group>
    <Group>
      <GroupBody>
        <SmallColumn $left={2} $right={7}>
          <SmallButton><SelectGrid mode="all" />모두 선택</SmallButton>
          <SmallButton><SelectGrid mode="none" />선택 안 함</SmallButton>
          <SmallButton><SelectGrid mode="invert" />선택 영역 반전</SmallButton>
        </SmallColumn>
      </GroupBody>
      <GroupName>선택</GroupName>
    </Group>
  </Ribbon>
);

const Arrow = ({ dir, color = '#666' }: { dir: 'left' | 'right' | 'up'; color?: string }) => {
  const d = {
    left: 'M13 7H2M6.500 2.500L2 7l4.500 4.500',
    right: 'M1 7h11M7.500 2.500L12 7l-4.500 4.500',
    up: 'M7 13V2M2 6.500L7 1.500l5 5',
  }[dir];
  return (
    <svg width="14" height="14" viewBox="0 0 14 14">
      <path d={d} fill="none" stroke={color} strokeWidth="1.800" />
    </svg>
  );
};

export default function App() {
  return (
    <Window>
      <GlobalStyle />
      <FileDefs />
      <TitleBar>
        <QuickTools>
          <ToolButton aria-label="폴더"><FolderSmall /></ToolButton>
          <TitleDivider />
          <ToolButton aria-label="속성"><DocCheck /></ToolButton>
          <ToolButton aria-label="새 폴더"><FolderSmall /></ToolButton>
          <ToolButton aria-label="사용자 지정">
            <svg width="7" height="7" viewBox="0 0 7 7"><path d="M0 .5h7" stroke="#222" /><path d="M0 3h7L3.500 6.500z" fill="#222" /></svg>
          </ToolButton>
          <TitleDivider />
        </QuickTools>
        <Title>current</Title>
        <WindowButton $shaded aria-label="최소화">
          <svg width="11" height="11"><path d="M0 5.500h10" stroke="#000" /></svg>
        </WindowButton>
        <WindowButton aria-label="최대화">
          <svg width="11" height="11"><path d="M.5.5h9v9h-9z" fill="none" stroke="#000" /></svg>
        </WindowButton>
        <WindowButton aria-label="닫기">
          <svg width="11" height="11"><path d="M.5.5l10 10M10.500.5l-10 10" stroke="#000" /></svg>
        </WindowButton>
      </TitleBar>
      <TabBar>
        <Tab $kind="file">파일</Tab>
        <Tab $kind="active">홈</Tab>
        <Tab>공유</Tab>
        <Tab>보기</Tab>
        <TabTools>
          <ToolButton aria-label="리본 최소화">
            <svg width="9" height="6" viewBox="0 0 9 6"><path d="M.5 5l4-4 4 4" fill="none" stroke="#9a9a9a" strokeWidth="1.300" /></svg>
          </ToolButton>
          <ToolButton aria-label="도움말"><HelpIcon /></ToolButton>
        </TabTools>
      </TabBar>
      <RibbonSection />
      <AddressRow>
        <NavButton $width={16} aria-label="뒤로"><Arrow dir="left" /></NavButton>
        <NavButton $width={44} aria-label="앞으로"><Arrow dir="right" color="#d0d0d0" /></NavButton>
        <NavButton $width={4} aria-label="최근 위치"><ChevronDown size={7} /></NavButton>
        <NavButton $width={28} aria-label="위로"><Arrow dir="up" /></NavButton>
        <AddressBox>
          <FolderSmall />
          <Crumbs>
            {crumbs.map((c) => (
              <Crumb key={c}><Chevron /><CrumbLink as="a" href="#" $latin={isLatin(c)}>{c}</CrumbLink></Crumb>
            ))}
          </Crumbs>
          <ChevronDown />
          <RefreshButton aria-label="새로 고침">
            <svg width="11" height="12" viewBox="0 0 11 12">
              <path d="M8.500 3A4.200 4.200 0 1 1 3 2.500" fill="none" stroke="#5a5a5a" strokeWidth="1.600" />
              <path d="M5.500 0H10v4.500H8.500V1.500h-3z" fill="#5a5a5a" />
            </svg>
          </RefreshButton>
        </AddressBox>
        <SearchBox>
          <SearchInput type="text" placeholder="current 검색" aria-label="current 검색" />
          <svg width="12" height="12" viewBox="0 0 12 12">
            <circle cx="7.500" cy="4.500" r="3.300" fill="none" stroke="#555" strokeWidth="1.600" />
            <path d="M5 7L1 11" stroke="#555" strokeWidth="2" />
          </svg>
        </SearchBox>
      </AddressRow>
      <Main>
        <Sidebar>
          {places.map((section) => (
            <PlaceList key={section[0].name}>
              {section.map((p) => (
                <li key={p.name}>
                  <Place href="#" $level={p.level} $selected={p.selected}>
                    {p.icon}
                    <Label $latin={isLatin(p.name)}>{p.name}</Label>
                    {p.pinned && <PinShape size={10} />}
                  </Place>
                </li>
              ))}
            </PlaceList>
          ))}
        </Sidebar>
        <Files>
          {files.map((f) => (
            <FileItem key={f.name}>{f.icon}<Label $latin>{f.name}</Label></FileItem>
          ))}
        </Files>
      </Main>
      <StatusBar>
        <Label>13개 항목</Label>
        <ViewButtons>
          <ViewButton aria-label="자세히">
            <svg width="16" height="13" viewBox="0 0 16 13">
              <path d="M.5.500h4v12h-4zM.5 4.500h4M.5 8.500h4" fill="none" stroke="#8a8a8a" />
              <path d="M6 2.500h4M12 2.500h4M6 6.500h4M12 6.500h4M6 10.500h4M12 10.500h4" stroke="#555" />
            </svg>
          </ViewButton>
          <ViewButton $on aria-label="큰 아이콘"><PictureIcon /></ViewButton>
        </ViewButtons>
      </StatusBar>
      <Ink width="1072" height="620" viewBox="0 0 1072 620" fill="none" stroke="#e90c12" strokeWidth="1.800" strokeLinecap="round" strokeLinejoin="round" aria-hidden="true">
        {strokes.map((d) => <path key={d} d={d} />)}
      </Ink>
    </Window>
  );
}
